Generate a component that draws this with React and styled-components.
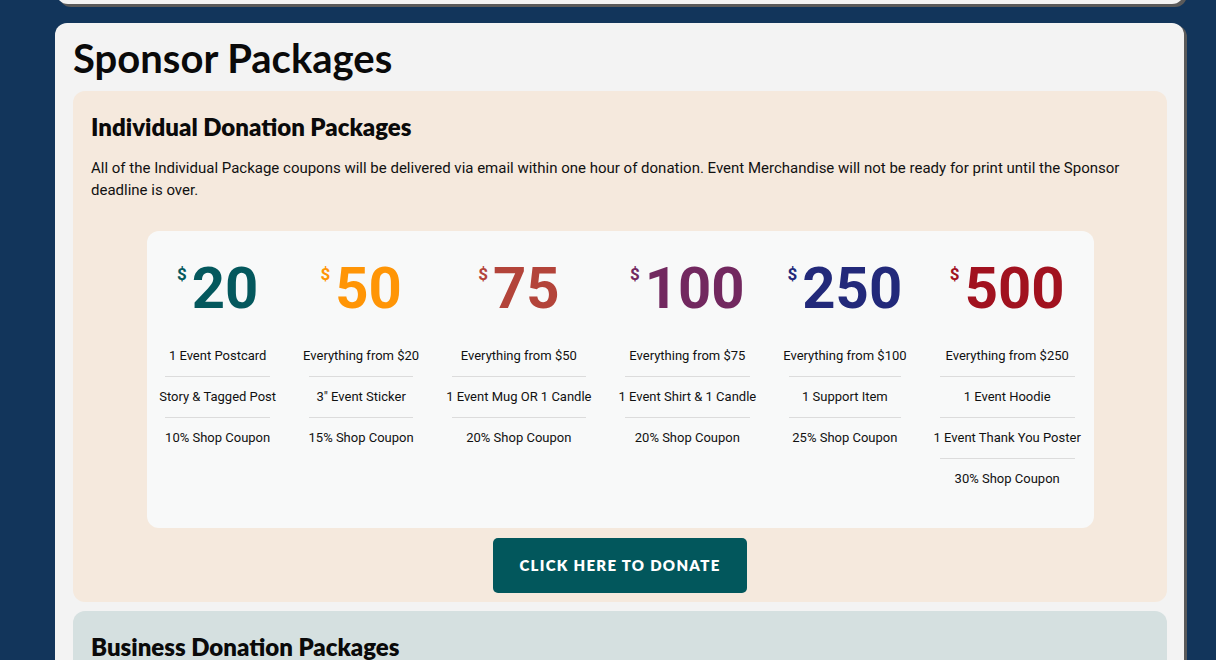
import React from 'react';
import styled, {createGlobalStyle} from 'styled-components';

const GlobalStyle = createGlobalStyle`
  html, body {
    margin: 0;
    padding: 0;
    background: #12355b;
    overflow: hidden;
  }
`;

const Page = styled.div`
  padding: 0 32px 0 55px;
  display: flex;
  flex-direction: column;
  gap: 19px;

  & > * {
    flex-shrink: 0;
  }
`;

const TopCard = styled.div`
  height: 40px;
  margin: -36px 0 0 1px;
  background: #f3f3f3;
  border-radius: 12px;
  box-shadow: 3px 3px 0 #5a5a5a;
`;

const MainCard = styled.div`
  background: #f3f3f3;
  border-radius: 12px;
  box-shadow: 3px 2px 0 #5a5a5a;
  padding: 11px 17px 0 18px;
  display: flex;
  flex-direction: column;
  gap: 9px;
`;

const PageTitle = styled.h1`
  margin: 0;
  font-family: Lato, "Noto Sans", sans-serif;
  font-weight: 700;
  font-size: 40px;
  line-height: 1.2;
  color: #0a0a0a;
`;

const Section = styled.section`
  background: ${p => p.$bg};
  border-radius: 12px;
  padding: 22px 18px 9px;
  min-height: 60px;
  display: flex;
  flex-direction: column;
  align-items: stretch;
`;

const SectionTitle = styled.h2`
  margin: 0;
  font-family: Lato, "Noto Sans", sans-serif;
  font-weight: 800;
  font-size: 24px;
  line-height: 1.2;
  color: #0a0a0a;
`;

const Intro = styled.p`
  margin: 15px 0 30px;
  font-family: Roboto, "Noto Sans", sans-serif;
  font-size: 15px;
  line-height: 22px;
  color: #111;
`;

const PriceCard = styled.div`
  align-self: center;
  width: 947px;
  box-sizing: border-box;
  background: #f8f9f9;
  border-radius: 12px;
  padding: 28px 0 29px;
  display: flex;
  justify-content: center;
  gap: 27px;
`;

const Tier = styled.div`
  display: flex;
  flex-direction: column;
  align-items: center;
`;

const PriceRow = styled.div`
  display: flex;
  align-items: flex-start;
  color: ${p => p.$color};
  font-family: Roboto, "Noto Sans", sans-serif;
  font-weight: 700;
  margin-bottom: 19px;
`;

const Dollar = styled.span`
  font-size: 17px;
  line-height: 1;
  margin: 7px 5px 0 0;
`;

const Amount = styled.span`
  font-size: 58px;
  line-height: 1;
`;

const Perks = styled.ul`
  list-style: none;
  margin: 0;
  padding: 0;
  align-self: stretch;
  display: flex;
  flex-direction: column;
  align-items: center;
`;

const Perk = styled.li`
  padding: 12px 0;
  font-family: Roboto, "Noto Sans", sans-serif;
  font-size: 13px;
  line-height: 16px;
  color: #111;
  white-space: nowrap;
  text-align: center;
`;

const Divider = styled.hr`
  align-self: stretch;
  margin: 0 6px;
  border: 0;
  border-top: 1px solid #dcdcdc;
`;

const DonateButton = styled.button`
  align-self: center;
  margin-top: 10px;
  width: 254px;
  height: 55px;
  border: 0;
  border-radius: 5px;
  background: #02575c;
  color: #fff;
  font-family: Lato, "Noto Sans", sans-serif;
  font-weight: 800;
  font-size: 15px;
  letter-spacing: 1.3px;
  cursor: pointer;
`;

const tiers = [
  {amount: '20', color: '#04585d', perks: ['1 Event Postcard', 'Story & Tagged Post', '10% Shop Coupon']},
  {amount: '50', color: '#ff9506', perks: ['Everything from $20', '3" Event Sticker', '15% Shop Coupon']},
  {amount: '75', color: '#b3443a', perks: ['Everything from $50', '1 Event Mug OR 1 Candle', '20% Shop Coupon']},
  {amount: '100', color: '#72285f', perks: ['Everything from $75', '1 Event Shirt & 1 Candle', '20% Shop Coupon']},
  {amount: '250', color: '#22297a', perks: ['Everything from $100', '1 Support Item', '25% Shop Coupon']},
  {amount: '500', color: '#a1121f', perks: ['Everything from $250', '1 Event Hoodie', '1 Event Thank You Poster', '30% Shop Coupon']},
];

const TierColumn = ({amount, color, perks}) => (
  <Tier>
    <PriceRow $color={color}>
      <Dollar>$</Dollar>
      <Amount>{amount}</Amount>
    </PriceRow>
    <Perks>
      {perks.map((perk, i) => (
        <React.Fragment key={perk}>
          {i > 0 && <Divider/>}
          <Perk>{perk}</Perk>
        </React.Fragment>
      ))}
    </Perks>
  </Tier>
);

function App() {
  return (
    <>
      <GlobalStyle/>
      <Page>
        <TopCard/>
        <MainCard>
          <PageTitle>Sponsor Packages</PageTitle>
          <Section $bg="#f5e9dd">
            <SectionTitle>Individual Donation Packages</SectionTitle>
            <Intro>
              All of the Individual Package coupons will be delivered via email within one hour of donation. Event Merchandise will not be ready for print until the Sponsor deadline is over.
            </Intro>
            <PriceCard>
              {tiers.map(t => <TierColumn key={t.amount} {...t}/>)}
            </PriceCard>
            <DonateButton>CLICK HERE TO DONATE</DonateButton>
          </Section>
          <Section $bg="#d5e0e0">
            <SectionTitle>Business Donation Packages</SectionTitle>
          </Section>
        </MainCard>
      </Page>
    </>
  );
}

export default App;
